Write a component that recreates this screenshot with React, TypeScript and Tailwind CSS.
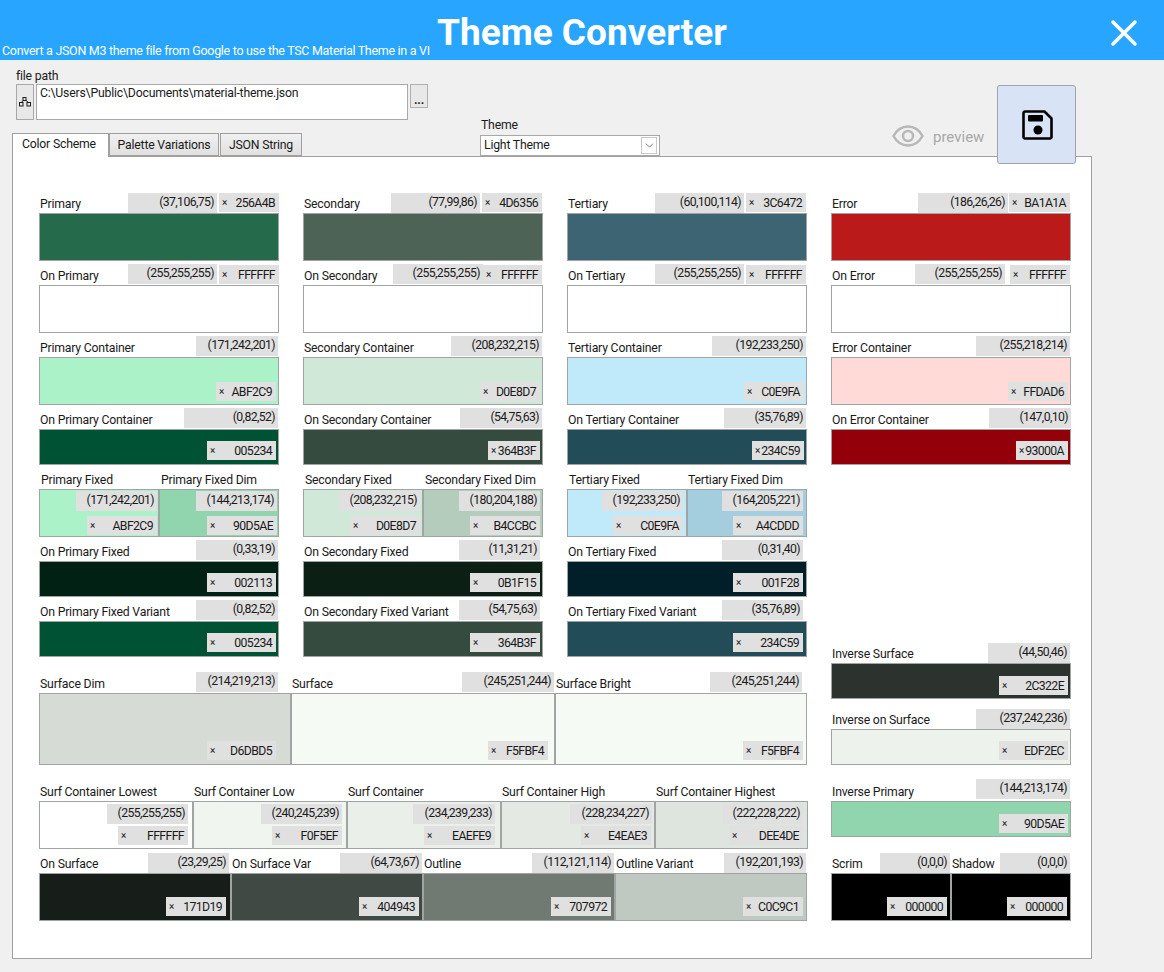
import { X, ChevronDown } from 'lucide-react'

interface CellProps {
  label: string
  bg: string
  rgb: string
  hex: string
  h?: string
  w?: string
  rgbC: string
  hexC: string
  headHex?: boolean
  labelC?: string
}

function HexChip({ hex, className }: { hex: string; className: string }) {
  return (
    <div className={`flex h-[19px] items-center justify-between bg-[#e0e0e0] pt-[1px] pl-[3px] pr-[4px] tracking-[-0.6px] ${className}`}>
      <span className="text-[10px] leading-none">×</span>
      <span>{hex}</span>
    </div>
  )
}

function RgbChip({ rgb, className }: { rgb: string; className: string }) {
  return <div className={`h-[20px] shrink-0 bg-[#e0e0e0] pr-[3px] text-right leading-[18px] tracking-[-0.6px] ${className}`}>{rgb}</div>
}

// label row + colour box; the hex chip sits either in the label row or inside the box
function Cell({ label, bg, rgb, hex, h = 'h-[48px]', w = 'w-[240px]', rgbC, hexC, headHex, labelC = 'pl-[1px]' }: CellProps) {
  return (
    <div className={`shrink-0 ${w}`}>
      <div className="flex h-[24px] items-end">
        <span className={`mb-[1px] shrink-0 whitespace-nowrap leading-[16px] ${labelC}`}>{label}</span>
        <div className="ml-auto flex items-end">
          <RgbChip rgb={rgb} className={rgbC} />
          {headHex && <HexChip hex={hex} className={hexC} />}
        </div>
      </div>
      <div className={`relative border border-[#a0a4a4] ${h} ${bg}`}>
        {!headHex && <HexChip hex={hex} className={`absolute ${hexC}`} />}
      </div>
    </div>
  )
}

interface SplitProps {
  label: string
  bg: string
  rgb: string
  hex: string
  chipR: string
  labelC: string
}

function SplitCell({ label, bg, rgb, hex, chipR, labelC }: SplitProps) {
  return (
    <div className="w-[120px] shrink-0">
      <div className="flex h-[24px] items-end">
        <span className={`mb-[1px] whitespace-nowrap leading-[16px] ${labelC}`}>{label}</span>
      </div>
      <div className={`relative h-[48px] border border-[#a0a4a4] ${bg}`}>
        <RgbChip rgb={rgb} className={`absolute top-[1px] w-[81px] ${chipR}`} />
        <HexChip hex={hex} className={`absolute bottom-[1px] w-[70px] ${chipR}`} />
      </div>
    </div>
  )
}

const column1: CellProps[] = [
  { label: 'Primary', bg: 'bg-[#256A4B]', rgb: '(37,106,75)', hex: '256A4B', rgbC: 'w-[89px] mr-[2px]', hexC: 'w-[60px] mb-[1px]', headHex: true },
  { label: 'On Primary', bg: 'bg-[#FFFFFF]', rgb: '(255,255,255)', hex: 'FFFFFF', rgbC: 'w-[89px] mr-[2px] mb-[1px]', hexC: 'w-[60px] mb-[1px]', headHex: true },
  { label: 'Primary Container', bg: 'bg-[#ABF2C9]', rgb: '(171,242,201)', hex: 'ABF2C9', rgbC: 'w-[82px] mr-[1px] mb-[1px]', hexC: 'w-[60px] right-[2px] bottom-[3px]' },
  { label: 'On Primary Container', bg: 'bg-[#005234]', rgb: '(0,82,52)', hex: '005234', h: 'h-[36px]', rgbC: 'w-[94px] mr-[1px] mb-[1px]', hexC: 'w-[69px] right-[2px] bottom-[4px]' },
]

const column1b: CellProps[] = [
  { label: 'On Primary Fixed', bg: 'bg-[#002113]', rgb: '(0,33,19)', hex: '002113', h: 'h-[36px]', rgbC: 'w-[82px] mr-[1px] mb-[1px]', hexC: 'w-[69px] right-[2px] bottom-[4px]' },
  { label: 'On Primary Fixed Variant', bg: 'bg-[#005234]', rgb: '(0,82,52)', hex: '005234', h: 'h-[36px]', rgbC: 'w-[82px] mr-[1px] mb-[1px]', hexC: 'w-[69px] right-[2px] bottom-[4px]' },
]

const column2: CellProps[] = [
  { label: 'Secondary', bg: 'bg-[#4D6356]', rgb: '(77,99,86)', hex: '4D6356', rgbC: 'w-[89px] mr-[2px]', hexC: 'w-[60px] mr-[1px] mb-[1px]', headHex: true },
  { label: 'On Secondary', bg: 'bg-[#FFFFFF]', rgb: '(255,255,255)', hex: 'FFFFFF', rgbC: 'w-[90px] mb-[1px]', hexC: 'w-[59px] mr-[1px] mb-[1px]', headHex: true },
  { label: 'Secondary Container', bg: 'bg-[#D0E8D7]', rgb: '(208,232,215)', hex: 'D0E8D7', rgbC: 'w-[91px] mr-[1px] mb-[1px]', hexC: 'w-[60px] right-[2px] bottom-[3px]' },
  { label: 'On Secondary Container', bg: 'bg-[#364B3F]', rgb: '(54,75,63)', hex: '364B3F', h: 'h-[36px]', rgbC: 'w-[82px] mr-[1px] mb-[1px]', hexC: 'w-[52px] right-[2px] bottom-[4px]' },
]

const column2b: CellProps[] = [
  { label: 'On Secondary Fixed', bg: 'bg-[#0B1F15]', rgb: '(11,31,21)', hex: '0B1F15', h: 'h-[36px]', rgbC: 'w-[81px] mr-[3px] mb-[1px]', hexC: 'w-[70px] right-[2px] bottom-[4px]' },
  { label: 'On Secondary Fixed Variant', bg: 'bg-[#364B3F]', rgb: '(54,75,63)', hex: '364B3F', h: 'h-[36px]', rgbC: 'w-[81px] mr-[3px] mb-[1px]', hexC: 'w-[70px] right-[2px] bottom-[4px]' },
]

const column3: CellProps[] = [
  { label: 'Tertiary', bg: 'bg-[#3C6472]', rgb: '(60,100,114)', hex: '3C6472', rgbC: 'w-[89px] mr-[2px]', hexC: 'w-[60px] mr-[1px] mb-[1px]', headHex: true },
  { label: 'On Tertiary', bg: 'bg-[#FFFFFF]', rgb: '(255,255,255)', hex: 'FFFFFF', rgbC: 'w-[89px] mr-[2px] mb-[1px]', hexC: 'w-[60px] mr-[1px] mb-[1px]', headHex: true },
  { label: 'Tertiary Container', bg: 'bg-[#C0E9FA]', rgb: '(192,233,250)', hex: 'C0E9FA', rgbC: 'w-[94px] mr-[1px] mb-[1px]', hexC: 'w-[60px] right-[2px] bottom-[3px]' },
  { label: 'On Tertiary Container', bg: 'bg-[#234C59]', rgb: '(35,76,89)', hex: '234C59', h: 'h-[36px]', rgbC: 'w-[82px] mr-[1px] mb-[1px]', hexC: 'w-[52px] right-[2px] bottom-[4px]' },
]

const column3b: CellProps[] = [
  { label: 'On Tertiary Fixed', bg: 'bg-[#001F28]', rgb: '(0,31,40)', hex: '001F28', h: 'h-[36px]', rgbC: 'w-[81px] mr-[4px] mb-[1px]', hexC: 'w-[70px] right-[3px] bottom-[4px]' },
  { label: 'On Tertiary Fixed Variant', bg: 'bg-[#234C59]', rgb: '(35,76,89)', hex: '234C59', h: 'h-[36px]', rgbC: 'w-[81px] mr-[4px] mb-[1px]', hexC: 'w-[70px] right-[3px] bottom-[4px]' },
]

const column4: CellProps[] = [
  { label: 'Error', bg: 'bg-[#BA1A1A]', rgb: '(186,26,26)', hex: 'BA1A1A', rgbC: 'w-[90px] mr-[1px]', hexC: 'w-[61px] mr-[1px] mb-[1px]', headHex: true },
  { label: 'On Error', bg: 'bg-[#FFFFFF]', rgb: '(255,255,255)', hex: 'FFFFFF', rgbC: 'w-[90px] mr-[5px] mb-[1px]', hexC: 'w-[60px] mr-[1px] mb-[1px]', headHex: true },
  { label: 'Error Container', bg: 'bg-[#FFDAD6]', rgb: '(255,218,214)', hex: 'FFDAD6', rgbC: 'w-[94px] mr-[1px] mb-[1px]', hexC: 'w-[60px] right-[2px] bottom-[3px]' },
  { label: 'On Error Container', bg: 'bg-[#93000A]', rgb: '(147,0,10)', hex: '93000A', h: 'h-[36px]', rgbC: 'w-[82px] mb-[1px]', hexC: 'w-[52px] right-[2px] bottom-[4px]' },
]

const surfaces: CellProps[] = [
  { label: 'Surface Dim', w: 'w-[252px]', h: 'h-[72px]', bg: 'bg-[#D6DBD5]', rgb: '(214,219,213)', hex: 'D6DBD5', rgbC: 'w-[82px] mr-[13px] mb-[1px]', hexC: 'w-[69px] right-[14px] bottom-[4px]' },
  { label: 'Surface', w: 'w-[264px]', h: 'h-[72px]', bg: 'bg-[#F5FBF4]', rgb: '(245,251,244)', hex: 'F5FBF4', rgbC: 'w-[92px] mr-[1px] mb-[1px]', hexC: 'w-[60px] right-[6px] bottom-[4px]' },
  { label: 'Surface Bright', w: 'w-[252px]', h: 'h-[72px]', bg: 'bg-[#F5FBF4]', rgb: '(245,251,244)', hex: 'F5FBF4', rgbC: 'w-[92px] mr-[5px] mb-[1px]', hexC: 'w-[60px] right-[3px] bottom-[4px]' },
]

const onSurfaces: CellProps[] = [
  { label: 'On Surface', w: 'w-[192px]', bg: 'bg-[#171D19]', rgb: '(23,29,25)', hex: '171D19', rgbC: 'w-[81px] mr-[2px]', hexC: 'w-[60px] right-[4px] bottom-[4px]' },
  { label: 'On Surface Var', w: 'w-[192px]', bg: 'bg-[#404943]', rgb: '(64,73,67)', hex: '404943', rgbC: 'w-[82px] mr-[1px]', hexC: 'w-[60px] right-[3px] bottom-[4px]' },
  { label: 'Outline', w: 'w-[192px]', bg: 'bg-[#707972]', rgb: '(112,121,114)', hex: '707972', rgbC: 'w-[82px] mr-[1px]', hexC: 'w-[60px] right-[3px] bottom-[4px]' },
  { label: 'Outline Variant', w: 'w-[192px]', bg: 'bg-[#C0C9C1]', rgb: '(192,201,193)', hex: 'C0C9C1', rgbC: 'w-[82px] mr-[1px]', hexC: 'w-[60px] right-[3px] bottom-[4px]' },
]

const containers = [
  { label: 'Surf Container Lowest', w: 'w-[154px]', bg: 'bg-[#FFFFFF]', rgb: '(255,255,255)', hex: 'FFFFFF', rgbC: 'w-[81px] right-[4px]', hexC: 'w-[70px] right-[4px]' },
  { label: 'Surf Container Low', w: 'w-[154px]', bg: 'bg-[#F0F5EF]', rgb: '(240,245,239)', hex: 'F0F5EF', rgbC: 'w-[81px] right-[4px]', hexC: 'w-[70px] right-[4px]' },
  { label: 'Surf Container', w: 'w-[154px]', bg: 'bg-[#EAEFE9]', rgb: '(234,239,233)', hex: 'EAEFE9', rgbC: 'w-[82px] right-[5px]', hexC: 'w-[71px] right-[5px]' },
  { label: 'Surf Container High', w: 'w-[154px]', bg: 'bg-[#E4EAE3]', rgb: '(228,234,227)', hex: 'E4EAE3', rgbC: 'w-[82px] right-[2px]', hexC: 'w-[70px] right-[3px]' },
  { label: 'Surf Container Highest', w: 'w-[153px]', bg: 'bg-[#DEE4DE]', rgb: '(222,228,222)', hex: 'DEE4DE', rgbC: 'w-[80px] right-[4px]', hexC: 'w-[74px] right-[4px]' },
]

function SaveIcon() {
  return (
    <svg width="32" height="32" viewBox="0 0 32 32" fill="none">
      <path d="M3 2.5h19.5L29.5 9.5V28a1.5 1.5 0 0 1-1.5 1.5H3A1.5 1.5 0 0 1 1.5 28V4A1.5 1.5 0 0 1 3 2.5Z" stroke="#000" strokeWidth="2.6" strokeLinejoin="round" />
      <rect x="6" y="6" width="15" height="6.5" rx="1" fill="#000" />
      <circle cx="16" cy="21" r="4.5" fill="#000" />
    </svg>
  )
}

function EyeIcon() {
  return (
    <svg width="32" height="24" viewBox="0 0 32 24" fill="none" stroke="#b8b8b8" strokeWidth="2.5">
      <path d="M1.5 12C5 5.5 10 2.5 16 2.5S27 5.5 30.5 12C27 18.5 22 21.5 16 21.5S5 18.5 1.5 12Z" />
      <circle cx="16" cy="12" r="5" />
    </svg>
  )
}

function PathIcon() {
  return (
    <svg width="12" height="10" viewBox="0 0 12 10" fill="none" stroke="#1a1a1a" strokeWidth="1">
      <rect x="4" y="0.5" width="3" height="3" />
      <rect x="0.5" y="5.5" width="3.5" height="3.5" />
      <rect x="8" y="5.5" width="3.5" height="3.5" />
      <path d="M4 3.5 2.5 5.5M7 3.5 9.5 5.5" />
    </svg>
  )
}

export default function App() {
  return (
    <div className="min-h-[972px] w-[1164px] overflow-hidden bg-[#f0f0f0] font-['Roboto',sans-serif] text-[12.25px] tracking-[-0.2px] text-[#1a1a1a]">
      {/* Title bar */}
      <div className="flex h-[60px] bg-[#27a5ff] text-white">
        <div className="w-[437px] shrink-0 self-end whitespace-nowrap pb-[1px] pl-[2px] text-[12.5px] leading-[16px] tracking-[-0.3px]">
          Convert a JSON M3 theme file from Google to use the TSC Material Theme in a VI
        </div>
        <div className="pt-[9px] text-[37px] leading-[48px] font-bold tracking-normal whitespace-nowrap">Theme Converter</div>
        <X className="mt-[11px] ml-auto mr-[18px] h-[44px] w-[44px]" strokeWidth={1.9} />
      </div>

      {/* Toolbar */}
      <div className="relative z-10 flex h-[96px] items-start">
        <div className="ml-[12px] w-[468px] shrink-0">
          <div className="pt-[8px] pl-[4px] leading-[16px]">file path</div>
          <div className="flex items-start pl-[4px]">
            <button className="flex h-[36px] w-[18px] items-center justify-center border border-[#a8a8a8] bg-[#e8e8e8]">
              <PathIcon />
            </button>
            <div className="ml-[2px] h-[36px] w-[372px] border border-[#a8a8a8] bg-white pl-[3px] leading-[16px]">
              C:\Users\Public\Documents\material-theme.json
            </div>
            <button className="ml-[2px] flex h-[24px] w-[18px] items-end justify-center border border-[#b0b0b0] bg-[#e8e8e8] font-bold leading-[14px]">
              ...
            </button>
          </div>
          <div className="mt-[13px] flex items-start">
            <div className="h-[24px] w-[97px] border-t border-r border-l border-[#a0a0a0] bg-white pl-[9px] leading-[20px]">Color Scheme</div>
            <div className="h-[23px] w-[110px] border border-[#a0a0a0] bg-gradient-to-b from-[#f0f0f0] to-[#e0e0e0] text-center leading-[22px]">Palette Variations</div>
            <div className="ml-[1px] h-[23px] w-[82px] border border-[#a0a0a0] bg-gradient-to-b from-[#f0f0f0] to-[#e0e0e0] text-center leading-[22px]">JSON String</div>
          </div>
        </div>
        <div className="w-[180px] shrink-0 pt-[57px]">
          <div className="pl-[1px] leading-[16px]">Theme</div>
          <div className="mt-[2px] flex h-[21px] items-center border border-[#a8a8a8] bg-white pl-[3px]">
            Light Theme
            <div className="ml-auto mr-[2px] flex h-[17px] w-[16px] items-center justify-center border border-[#c8c8c8]">
              <ChevronDown className="h-[13px] w-[13px]" strokeWidth={1} />
            </div>
          </div>
        </div>
        <div className="ml-[232px] flex w-[93px] shrink-0 items-center pt-[64px]">
          <EyeIcon />
          <span className="mt-[2px] ml-[9px] text-[15px] leading-[16px] tracking-normal text-[#a8a8a8]">preview</span>
        </div>
        <button className="mt-[25px] ml-[12px] flex h-[79px] w-[79px] shrink-0 items-center justify-center rounded-[3px] border border-[#a0a4b0] bg-[#d9e3f6] pl-[2px]">
          <SaveIcon />
        </button>
      </div>

      {/* Color scheme panel */}
      <div className="ml-[12px] flex h-[803px] w-[1080px] gap-[24px] border border-[#a0a0a0] bg-white pt-[32px] pl-[26px]">
        <div className="w-[768px] shrink-0">
          <div className="flex gap-[24px]">
            <div className="w-[240px]">
              {column1.map((c) => <Cell key={c.label} {...c} />)}
              <div className="flex">
                <SplitCell label="Primary Fixed" bg="bg-[#ABF2C9]" rgb="(171,242,201)" hex="ABF2C9" chipR="right-[1px]" labelC="pl-[2px]" />
                <SplitCell label="Primary Fixed Dim" bg="bg-[#90D5AE]" rgb="(144,213,174)" hex="90D5AE" chipR="right-[1px]" labelC="pl-[2px]" />
              </div>
              {column1b.map((c) => <Cell key={c.label} {...c} />)}
            </div>
            <div className="w-[240px]">
              {column2.map((c) => <Cell key={c.label} {...c} />)}
              <div className="flex">
                <SplitCell label="Secondary Fixed" bg="bg-[#D0E8D7]" rgb="(208,232,215)" hex="D0E8D7" chipR="right-[2px]" labelC="pl-[2px]" />
                <SplitCell label="Secondary Fixed Dim" bg="bg-[#B4CCBC]" rgb="(180,204,188)" hex="B4CCBC" chipR="right-[2px]" labelC="pl-[2px]" />
              </div>
              {column2b.map((c) => <Cell key={c.label} {...c} />)}
            </div>
            <div className="w-[240px]">
              {column3.map((c) => <Cell key={c.label} {...c} />)}
              <div className="flex">
                <SplitCell label="Tertiary Fixed" bg="bg-[#C0E9FA]" rgb="(192,233,250)" hex="C0E9FA" chipR="right-[3px]" labelC="pl-[2px]" />
                <SplitCell label="Tertiary Fixed Dim" bg="bg-[#A4CDDD]" rgb="(164,205,221)" hex="A4CDDD" chipR="right-[3px]" labelC="pl-[1px]" />
              </div>
              {column3b.map((c) => <Cell key={c.label} {...c} />)}
            </div>
          </div>

          <div className="mt-[12px] flex">
            {surfaces.map((c) => <Cell key={c.label} {...c} />)}
          </div>

          <div className="mt-[12px] flex">
            {containers.map((c) => (
              <div key={c.label} className={`shrink-0 ${c.w}`}>
                <div className="flex h-[24px] items-end">
                  <span className="mb-[1px] whitespace-nowrap pl-[1px] leading-[16px]">{c.label}</span>
                </div>
                <div className={`relative h-[48px] border border-[#a0a4a4] ${c.bg}`}>
                  <RgbChip rgb={c.rgb} className={`absolute top-[2px] ${c.rgbC}`} />
                  <HexChip hex={c.hex} className={`absolute bottom-[3px] ${c.hexC}`} />
                </div>
              </div>
            ))}
          </div>

          <div className="flex">
            {onSurfaces.map((c) => <Cell key={c.label} {...c} />)}
          </div>
        </div>

        <div className="w-[240px] shrink-0">
          {column4.map((c) => <Cell key={c.label} {...c} />)}
          <div className="mt-[174px]">
            <Cell label="Inverse Surface" bg="bg-[#2C322E]" rgb="(44,50,46)" hex="2C322E" h="h-[36px]" rgbC="w-[82px] mr-[1px]" hexC="w-[69px] right-[2px] bottom-[3px]" />
          </div>
          <div className="mt-[6px]">
            <Cell label="Inverse on Surface" bg="bg-[#EDF2EC]" rgb="(237,242,236)" hex="EDF2EC" h="h-[36px]" rgbC="w-[94px] mr-[1px]" hexC="w-[69px] right-[2px] bottom-[4px]" />
          </div>
          <div className="mt-[12px]">
            <Cell label="Inverse Primary" bg="bg-[#90D5AE]" rgb="(144,213,174)" hex="90D5AE" h="h-[36px]" rgbC="w-[94px] mr-[1px] mb-[2px]" hexC="w-[69px] right-[2px] bottom-[3px]" />
          </div>
          <div className="mt-[12px] flex">
            <Cell label="Scrim" w="w-[120px]" bg="bg-[#000000]" rgb="(0,0,0)" hex="000000" rgbC="w-[70px] mr-[1px]" hexC="w-[60px] right-[3px] bottom-[4px]" />
            <Cell label="Shadow" w="w-[120px]" bg="bg-[#000000]" rgb="(0,0,0)" hex="000000" rgbC="w-[70px] mr-[1px]" hexC="w-[60px] right-[3px] bottom-[4px]" />
          </div>
        </div>
      </div>
    </div>
  )
}
